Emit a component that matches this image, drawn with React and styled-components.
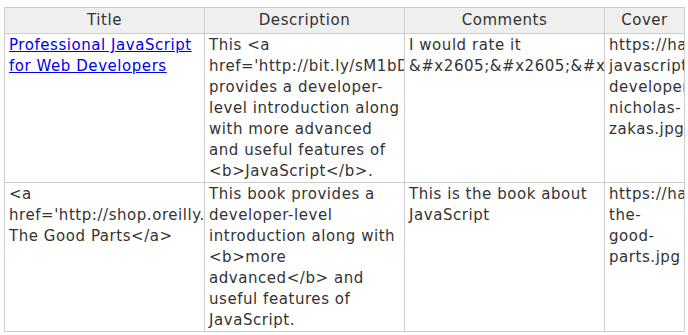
import styled, { createGlobalStyle } from "styled-components";

const GlobalStyle = createGlobalStyle`
  body {
    margin: 0;
    background: #fff;
  }
`;

const Page = styled.div`
  padding: 7px 4px;
  font-family: "DejaVu Sans", Verdana, sans-serif;
  font-size: 15px;
  letter-spacing: 0.55px;
  color: #333;
`;

const Table = styled.table`
  width: 680px;
  table-layout: fixed;
  border-collapse: collapse;
  border: 1px solid #ccc;
`;

const Col = styled.col`
  width: ${(p) => p.$w}px;
`;

const HeadCell = styled.th`
  background: #efefef;
  border: 1px solid #ccc;
  font-weight: normal;
  text-align: center;
  line-height: 21px;
  padding: 2px 4px;
  overflow: hidden;
  white-space: nowrap;
`;

const Cell = styled.td`
  border: 1px solid #ccc;
  vertical-align: top;
  line-height: 21px;
  padding: 1px 4px 0;
  overflow: hidden;
`;

const Link = styled.a`
  color: #0000ee;
  text-decoration: underline;
`;

const books = [
  {
    title: (
      <Link href="#">Professional JavaScript for Web Developers</Link>
    ),
    description:
      "This <a href='http://bit.ly/sM1bDf'>book</a> provides a developer-level introduction along with more advanced and useful features of <b>JavaScript</b>.",
    comments: "I would rate it &#x2605;&#x2605;&#x2605;&#x2605;&#x2606;",
    cover:
      "https://hackr.io/professional-javascriptforweb-developers-nicholas-zakas.jpg",
  },
  {
    title:
      "<a href='http://shop.oreilly.com/product/9780596517748.do'>JavaScript: The Good Parts</a>",
    description:
      "This book provides a developer-level introduction along with <b>more advanced</b> and useful features of JavaScript.",
    comments: "This is the book about JavaScript",
    cover: "https://hackr.io/javascript-the-good-parts.jpg",
  },
];

export default function App() {
  return (
    <Page>
      <GlobalStyle />
      <Table>
        <colgroup>
          <Col $w={200} />
          <Col $w={200} />
          <Col $w={200} />
          <Col $w={80} />
        </colgroup>
        <thead>
          <tr>
            <HeadCell>Title</HeadCell>
            <HeadCell>Description</HeadCell>
            <HeadCell>Comments</HeadCell>
            <HeadCell>Cover</HeadCell>
          </tr>
        </thead>
        <tbody>
          {books.map((b, i) => (
            <tr key={i}>
              <Cell>{b.title}</Cell>
              <Cell>{b.description}</Cell>
              <Cell>{b.comments}</Cell>
              <Cell>{b.cover}</Cell>
            </tr>
          ))}
        </tbody>
      </Table>
    </Page>
  );
}
